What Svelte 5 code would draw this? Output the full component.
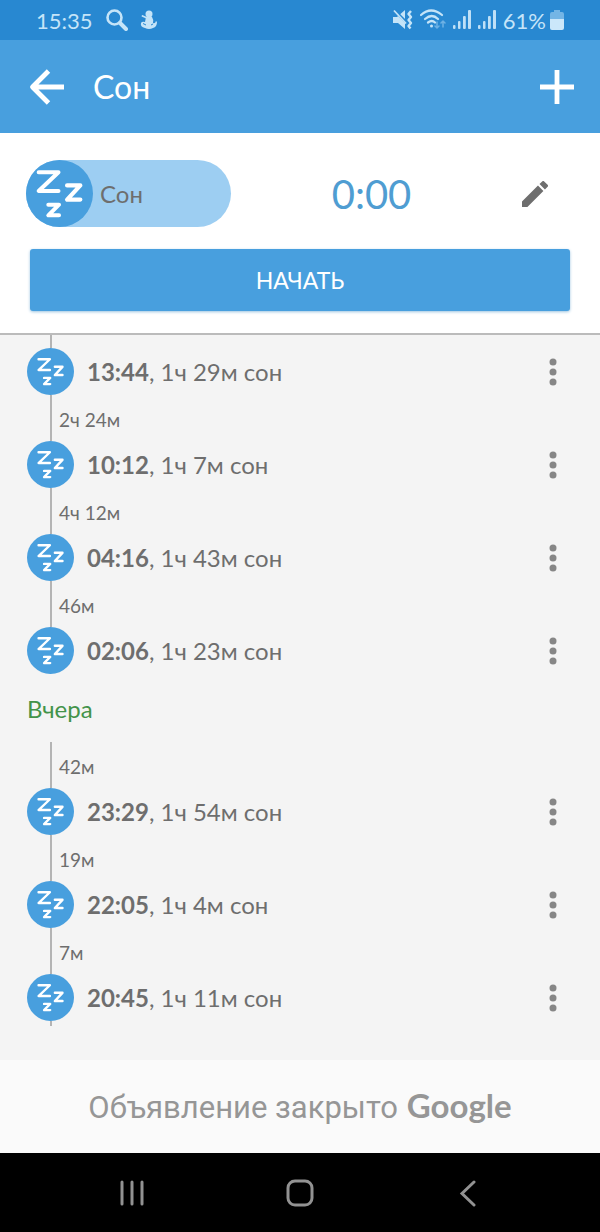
<script>
  const groups = [
    {
      title: '',
      items: [
        { time: '13:44', text: '1ч 29м сон' },
        { gap: '2ч 24м' },
        { time: '10:12', text: '1ч 7м сон' },
        { gap: '4ч 12м' },
        { time: '04:16', text: '1ч 43м сон' },
        { gap: '46м' },
        { time: '02:06', text: '1ч 23м сон' }
      ]
    },
    {
      title: 'Вчера',
      items: [
        { gap: '42м' },
        { time: '23:29', text: '1ч 54м сон' },
        { gap: '19м' },
        { time: '22:05', text: '1ч 4м сон' },
        { gap: '7м' },
        { time: '20:45', text: '1ч 11м сон' }
      ]
    }
  ];
</script>

{#snippet sleepIcon(scale)}
  <svg class="sleep" viewBox="0 0 66 66" aria-hidden="true">
    <circle cx="33" cy="33" r="33" fill="#489fde" />
    <g
      fill="none"
      stroke="#fff"
      stroke-linecap="round"
      stroke-linejoin="round"
      transform="translate(33 33) scale({scale}) translate(-33 -33)"
    >
      <path d="M12.500 12H32L12.500 30.500H32" stroke-width="4" />
      <path d="M40.500 25H53.500L40.500 39H53.500" stroke-width="4.200" />
      <path d="M22 44H32.500L22 54.500H32.500" stroke-width="4" />
    </g>
  </svg>
{/snippet}

{#snippet signal()}
  <svg width="18" height="20" viewBox="0 0 18 20" fill="#bfe0f7" aria-hidden="true">
    <rect x="0" y="15" width="2.500" height="4" rx="1" />
    <rect x="5" y="11" width="2.500" height="8" rx="1" />
    <rect x="10" y="6" width="2.800" height="13" rx="1" />
    <rect x="15" y="0" width="3" height="19" rx="1" />
  </svg>
{/snippet}

<div class="screen">
  <div class="status">
    <span class="clock">15:35</span>
    <svg width="22" height="22" viewBox="0 0 22 22" fill="none" stroke="#c5e4f8" aria-hidden="true">
      <circle cx="8.500" cy="8.500" r="7" stroke-width="2.600" />
      <path d="M14 14l6 6" stroke-width="4" stroke-linecap="round" />
    </svg>
    <svg class="baby" width="18" height="20" viewBox="0 0 18 20" fill="#c5e4f8" aria-hidden="true">
      <circle cx="9" cy="4" r="3.500" />
      <path d="M6 7.500L2.500 6" fill="none" stroke="#c5e4f8" stroke-width="1.800" stroke-linecap="round" />
      <path d="M6 7h6q2 3 1 6 2 1 3-2l1 1q0 5-4 6-4 2-8 0-5-1-4-5 1-2 4-1z" />
      <path d="M3 13.500l3 1.500M11 15l2-1" stroke="#2888d1" stroke-width="1" />
    </svg>
    <span class="spacer"></span>
    <svg width="21" height="22" viewBox="0 0 21 22" aria-hidden="true">
      <path d="M1 8h4l8-7v19l-7-6H1z" fill="#c5e4f8" />
      <path d="M1 0l14 14" stroke="#2888d1" stroke-width="3" />
      <path d="M2 1.500l12 13" stroke="#c5e4f8" stroke-width="1.800" />
      <path d="M19 2l-2.500 3 2.500 3-2.500 3 2.500 3-2.500 3 2 2.500" fill="none" stroke="#c5e4f8" stroke-width="2.400" stroke-linejoin="round" />
    </svg>
    <svg width="26" height="22" viewBox="0 0 26 22" fill="none" stroke="#c5e4f8" stroke-linecap="round" aria-hidden="true">
      <path d="M1 6q10-9 21 0M5 10q7-6 13 0M8 13.500q4-3 7 0" stroke-width="2.200" />
      <circle cx="11.500" cy="17" r="1.500" fill="#c5e4f8" stroke="none" />
      <path d="M17 13v6m-2-2l2 2 2-2M23 18v-6m-2 2l2-2 2 2" stroke="#6db1e4" stroke-width="1.500" />
    </svg>
    {@render signal()}
    {@render signal()}
    <span class="percent">61%</span>
    <svg width="14" height="20" viewBox="0 0 14 20" aria-hidden="true">
      <path d="M4 0h6v2h2q2 0 2 2v5H0V4q0-2 2-2h2z" fill="#74b5e5" />
      <path d="M0 9h14v9q0 2-2 2H2q-2 0-2-2z" fill="#cbe7fa" />
    </svg>
  </div>

  <header>
    <button aria-label="Назад">
      <svg width="36" height="36" viewBox="0 0 36 36" fill="none" stroke="#fff" stroke-width="4.800" aria-hidden="true">
        <path d="M35 18H4M19.500 2L3.500 18l16 16" stroke-linejoin="round" />
      </svg>
    </button>
    <h1>Сон</h1>
    <button aria-label="Добавить">
      <svg width="34" height="34" viewBox="0 0 34 34" stroke="#fff" stroke-width="4.800" aria-hidden="true">
        <path d="M17 0v34M0 17h34" />
      </svg>
    </button>
  </header>

  <section class="timer">
    <div class="current">
      <div class="pill">{@render sleepIcon(1)}<span>Сон</span></div>
      <output>0:00</output>
      <button class="edit" aria-label="Изменить">
        <svg width="26" height="26" viewBox="3 3 18 18" fill="#6e6e6e" aria-hidden="true">
          <path d="M3 17.250V21h3.750L17.810 9.940l-3.750-3.750zM20.710 7.040a1 1 0 0 0 0-1.410l-2.340-2.340a1 1 0 0 0-1.410 0l-1.830 1.830 3.750 3.750z" />
        </svg>
      </button>
    </div>
    <button class="start">НАЧАТЬ</button>
  </section>

  <main>
    <div class="line lead"></div>
    {#each groups as group}
      {#if group.title}<h2>{group.title}</h2>{/if}
      {#each group.items as item}
        {#if item.gap}
          <div class="line gap">{item.gap}</div>
        {:else}
          <div class="entry">
            {@render sleepIcon(0.82)}
            <p><b>{item.time}</b>, {item.text}</p>
            <button aria-label="Меню записи">
              <svg width="8" height="28" viewBox="0 0 8 28" fill="#868686" aria-hidden="true">
                <circle cx="4" cy="4" r="3.500" /><circle cx="4" cy="14" r="3.500" /><circle cx="4" cy="24" r="3.500" />
              </svg>
            </button>
          </div>
        {/if}
      {/each}
    {/each}
    <div class="line tail"></div>
  </main>

  <aside>Объявление закрыто <span>Google</span></aside>

  <nav>
    <button aria-label="Недавние">
      <svg width="26" height="28" viewBox="0 0 26 28" stroke="#929292" stroke-width="3" stroke-linecap="round" aria-hidden="true">
        <path d="M3 3v22M13 3v22M23 3v22" />
      </svg>
    </button>
    <button aria-label="Домой">
      <svg width="28" height="28" viewBox="0 0 28 28" fill="none" stroke="#929292" stroke-width="3" aria-hidden="true">
        <rect x="2" y="2" width="24" height="24" rx="7" />
      </svg>
    </button>
    <button aria-label="Назад">
      <svg width="28" height="28" viewBox="0 0 28 28" fill="none" stroke="#929292" stroke-width="3" stroke-linecap="round" aria-hidden="true">
        <path d="M20 3L8 14.500 20 26" />
      </svg>
    </button>
  </nav>
</div>

<style>
  :global(body) { margin: 0; }
  .screen {
    display: flex;
    flex-direction: column;
    min-height: 100vh;
    background: #f4f4f4;
    color: #6e6e6e;
    font-family: Lato, "Noto Sans", sans-serif;
  }
  button {
    display: flex;
    align-items: center;
    justify-content: center;
    margin: 0;
    padding: 0;
    border: 0;
    background: none;
    font: inherit;
    color: inherit;
    cursor: pointer;
  }
  svg { display: block; flex: none; }
  .status {
    display: flex;
    align-items: center;
    gap: 7px;
    height: 40px;
    padding: 0 36px;
    background: #2888d1;
    color: #c5e4f8;
    font-size: 22px;
  }
  .clock { margin-right: 6px; }
  .baby { margin-left: 5px; }
  .spacer { flex: 1; }
  .percent { margin-right: -3px; }
  header {
    display: flex;
    align-items: center;
    height: 93px;
    padding: 0 26px 0 29px;
    background: #489fde;
    color: #fff;
  }
  h1 {
    flex: 1;
    margin: 0 0 0 28px;
    font-size: 32px;
    font-weight: 400;
  }
  .timer {
    padding: 27px 30px 22px;
    border-bottom: 2px solid #bbb;
    background: #fff;
  }
  .current {
    display: grid;
    grid-template-columns: 205px 1fr 58px;
    align-items: center;
    margin-left: -4px;
  }
  .pill {
    display: flex;
    align-items: center;
    gap: 7px;
    border-radius: 34px;
    background: #9dcef2;
    font-size: 24px;
  }
  .pill .sleep { width: 67px; height: 67px; }
  output {
    text-align: center;
    color: #4f9dd2;
    font-size: 40px;
    line-height: 48px;
  }
  .edit { width: 46px; height: 48px; }
  .start {
    width: 100%;
    height: 62px;
    margin-top: 22px;
    border-radius: 3px;
    background: #489fde;
    box-shadow: 0 1px 3px #9cc4e0;
    color: #fff;
    font-size: 23px;
  }
  main { flex: 1; padding: 0 27px 34px; }
  .line {
    margin-left: 23px;
    border-left: 2px solid #b4b4b4;
  }
  .lead { height: 13px; }
  .tail { height: 5px; }
  .gap {
    height: 46px;
    padding-left: 7px;
    line-height: 50px;
    font-size: 19px;
  }
  .entry { display: flex; align-items: center; height: 47px; }
  .entry .sleep { width: 47px; height: 47px; }
  p { flex: 1; margin: 0 0 0 13px; font-size: 24px; }
  .entry button { width: 40px; height: 47px; }
  h2 {
    height: 68px;
    margin: 0;
    line-height: 70px;
    color: #43934a;
    font-size: 24px;
    font-weight: 400;
  }
  aside {
    display: flex;
    align-items: baseline;
    justify-content: center;
    gap: 9px;
    height: 93px;
    line-height: 91px;
    background: #fafafa;
    color: #969696;
    font-family: Roboto, sans-serif;
    font-size: 31px;
  }
  aside span { font-family: Lato, sans-serif; font-size: 33px; font-weight: 700; }
  nav {
    display: grid;
    grid-template-columns: repeat(3, 1fr);
    height: 79px;
    padding: 0 48px;
    background: #000;
  }
</style>
